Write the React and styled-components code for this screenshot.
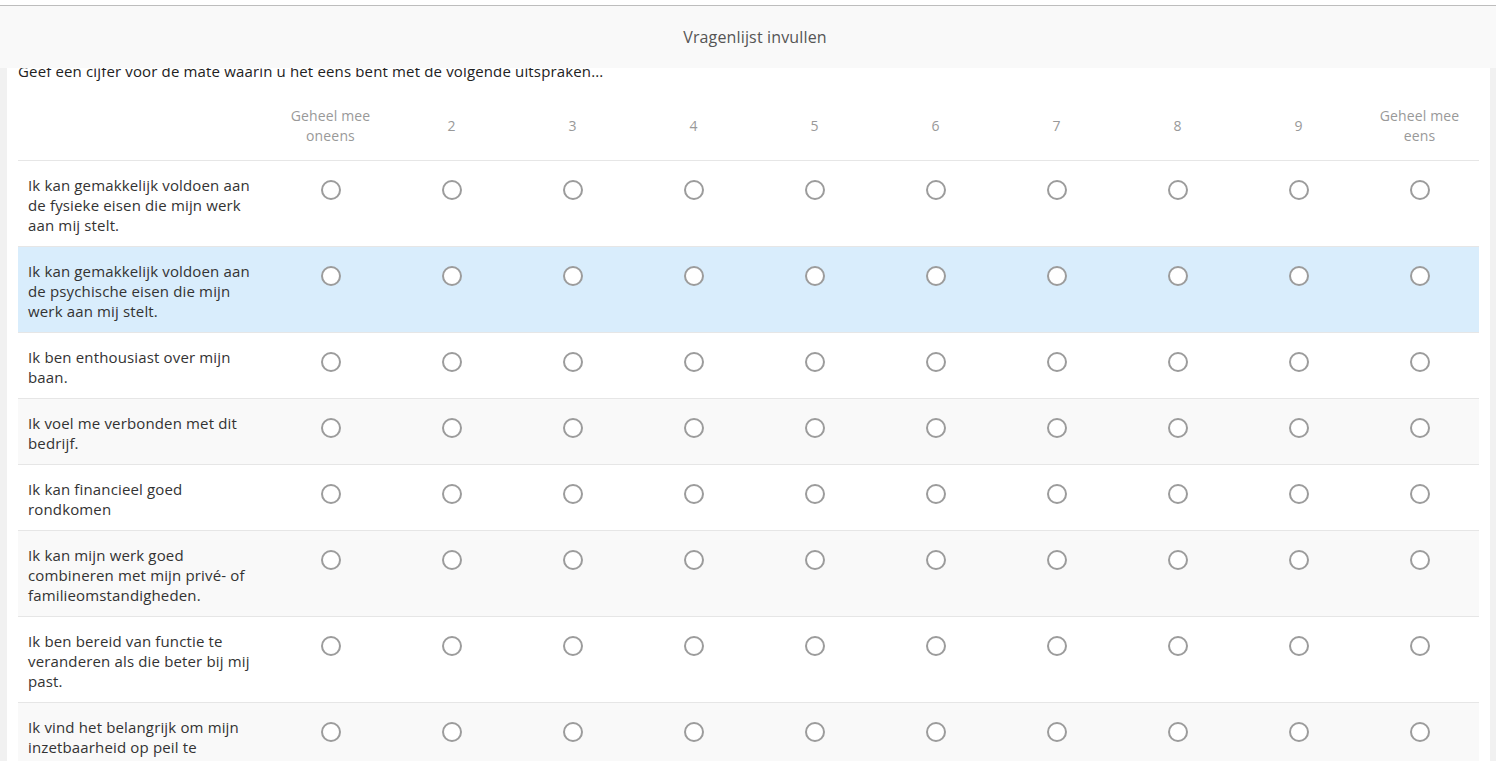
import React from 'react';
import styled, { createGlobalStyle } from 'styled-components';

const GlobalStyle = createGlobalStyle`
  html, body {
    margin: 0;
    padding: 0;
    background: #f1f1f1;
    font-family: 'Open Sans', 'Liberation Sans', sans-serif;
  }
`;

const TopBar = styled.header`
  position: fixed;
  top: 0;
  left: 0;
  right: 0;
  z-index: 10;
  padding-top: 5px;
  background: #ffffff;
`;

const TopBarInner = styled.div`
  height: 62px;
  border-top: 1px solid #bdbdbd;
  background: #f9f9f9;
  display: flex;
  align-items: center;
  justify-content: center;
  padding-left: 14px;
  font-size: 16px;
  letter-spacing: 0.15px;
  color: #555555;
`;

const Sheet = styled.main`
  margin: 0 6px 0 7px;
  padding: 61px 11px 0 11px;
  background: #ffffff;
  min-height: 700px;
`;

const Intro = styled.p`
  margin: 0 0 11px 0;
  font-size: 15px;
  letter-spacing: 0.15px;
  line-height: 20px;
  color: #222222;
`;

const Grid = styled.table`
  width: 100%;
  table-layout: fixed;
  border-collapse: collapse;
`;

const HeadCell = styled.th`
  font-weight: 400;
  font-size: 14px;
  letter-spacing: 0.15px;
  line-height: 20px;
  color: #999999;
  text-align: center;
  padding: 14px 4px 14px 6px;
  border-bottom: 1px solid #e6e6e6;
`;

const Row = styled.tr`
  background: ${(p) => (p.$active ? '#d9edfc' : p.$alt ? '#f9f9f9' : '#ffffff')};
`;

const Statement = styled.td`
  font-size: 15px;
  letter-spacing: 0.15px;
  line-height: 20px;
  color: #333333;
  padding: 14px 18px 11px 10px;
  vertical-align: top;
  border-bottom: 1px solid #e6e6e6;
`;

const Choice = styled.td`
  text-align: center;
  vertical-align: top;
  padding: 19px 0 0 0;
  border-bottom: 1px solid #e6e6e6;
`;

const Radio = styled.span`
  display: inline-block;
  box-sizing: border-box;
  width: 20px;
  height: 20px;
  border-radius: 50%;
  border: 2px solid #9c9c9c;
  background: #ffffff;
  margin-left: 3px;
`;

const scale = ['Geheel mee oneens', '2', '3', '4', '5', '6', '7', '8', '9', 'Geheel mee eens'];

const statements = [
  'Ik kan gemakkelijk voldoen aan de fysieke eisen die mijn werk aan mij stelt.',
  'Ik kan gemakkelijk voldoen aan de psychische eisen die mijn werk aan mij stelt.',
  'Ik ben enthousiast over mijn baan.',
  'Ik voel me verbonden met dit bedrijf.',
  'Ik kan financieel goed rondkomen',
  'Ik kan mijn werk goed combineren met mijn privé- of familieomstandigheden.',
  'Ik ben bereid van functie te veranderen als die beter bij mij past.',
  'Ik vind het belangrijk om mijn inzetbaarheid op peil te houden.',
];

export default function App() {
  return (
    <>
      <GlobalStyle />
      <TopBar>
        <TopBarInner>Vragenlijst invullen</TopBarInner>
      </TopBar>
      <Sheet>
        <Intro>Geef een cijfer voor de mate waarin u het eens bent met de volgende uitspraken...</Intro>
        <Grid>
          <colgroup>
            <col style={{ width: '251px' }} />
            {scale.map((s) => (
              <col key={s} />
            ))}
          </colgroup>
          <thead>
            <tr>
              <HeadCell />
              {scale.map((s) => (
                <HeadCell key={s}>{s}</HeadCell>
              ))}
            </tr>
          </thead>
          <tbody>
            {statements.map((text, i) => (
              <Row key={text} $active={i === 1} $alt={i % 2 === 1}>
                <Statement>{text}</Statement>
                {scale.map((s) => (
                  <Choice key={s}>
                    <Radio />
                  </Choice>
                ))}
              </Row>
            ))}
          </tbody>
        </Grid>
      </Sheet>
    </>
  );
}
